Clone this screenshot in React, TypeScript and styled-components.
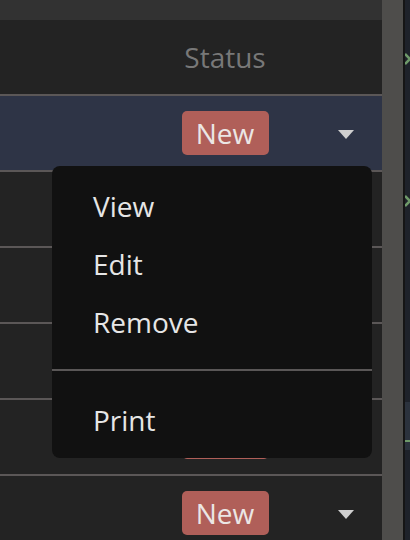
import React from "react";
import styled, { createGlobalStyle } from "styled-components";

const Global = createGlobalStyle`
  html, body { margin: 0; padding: 0; background: #232323; }
  body { font-family: "Open Sans", "Noto Sans", sans-serif; overflow: hidden; }
`;

const Frame = styled.div`
  display: flex;
  width: 410px;
  height: 540px;
  overflow: hidden;
  position: relative;
`;

const Main = styled.div`
  width: 382px;
  display: flex;
  flex-direction: column;
  background: #232323;
`;

const TopBar = styled.div`
  height: 20px;
  flex: none;
  background: #323232;
`;

const Row = styled.div<{ $selected?: boolean; $header?: boolean }>`
  height: 74px;
  flex: none;
  display: grid;
  grid-template-columns: 1fr 90px 72px;
  column-gap: 40px;
  align-items: center;
  justify-items: center;
  background: ${(p) => (p.$selected ? "#2e3446" : "#232323")};
  border-bottom: 2px solid #5b5757;
`;

const HeaderLabel = styled.span`
  grid-column: 2;
  font-size: 28px;
  color: #787878;
  white-space: nowrap;
`;

const Badge = styled.span`
  grid-column: 2;
  width: 87px;
  height: 44px;
  border-radius: 5px;
  background: #b05f59;
  color: #ebe6e5;
  font-size: 28px;
  display: flex;
  align-items: center;
  justify-content: center;
  margin-top: -1px;
`;

const Caret = styled.span`
  grid-column: 3;
  width: 0;
  height: 0;
  border-left: 8.5px solid transparent;
  border-right: 8.5px solid transparent;
  border-top: 9px solid #cfcfcf;
  margin-top: 2px;
`;

const Scrollbar = styled.div`
  width: 21px;
  background: #4e4d4b;
`;

const Divider = styled.div`
  width: 2px;
  background: #151515;
`;

const SidePanel = styled.div`
  flex: 1;
  background: #1e222a;
  display: flex;
  flex-direction: column;
`;

const Mark = styled.svg<{ $top: number }>`
  display: block;
  margin-top: ${(p) => p.$top}px;
`;

const SideBlock = styled.div`
  margin-top: 188px;
  height: 48px;
  background: #2b323d;
  display: flex;
  flex-direction: column;
  justify-content: flex-end;
  padding-bottom: 8px;
  box-sizing: border-box;
`;

const SideLine = styled.div`
  height: 2px;
  background: #6f9a6a;
`;

const Menu = styled.div`
  position: absolute;
  left: 52px;
  top: 166px;
  width: 320px;
  height: 292px;
  box-sizing: border-box;
  padding: 11px 0 9px;
  background: #111111;
  border-radius: 8px;
  display: flex;
  flex-direction: column;
`;

const MenuItem = styled.div`
  height: 58px;
  display: flex;
  align-items: center;
  padding-left: 41px;
  font-size: 28px;
  color: #e6e6e6;
`;

const Separator = styled.div`
  height: 2px;
  margin: 18px 0 20px;
  background: #5a5757;
`;

const rows = [true, false, false, false, false, false];

export default function App() {
  return (
    <>
      <Global />
      <Frame>
        <Main>
          <TopBar />
          <Row $header>
            <HeaderLabel>Status</HeaderLabel>
          </Row>
          {rows.map((sel, i) => (
            <Row key={i} $selected={sel}>
              <Badge>New</Badge>
              <Caret />
            </Row>
          ))}
        </Main>
        <Scrollbar />
        <Divider />
        <SidePanel>
          <Mark $top={52} width="5" height="20" viewBox="0 0 5 20">
            <path d="M0 2 L5 7 L0 12" stroke="#6f9a6a" strokeWidth="2.5" fill="none" />
          </Mark>
          <Mark $top={122} width="5" height="20" viewBox="0 0 5 20">
            <path d="M0 2 L5 7 L0 12" stroke="#6f9a6a" strokeWidth="2.5" fill="none" />
          </Mark>
          <SideBlock>
            <SideLine />
          </SideBlock>
        </SidePanel>
        <Menu>
          <MenuItem>View</MenuItem>
          <MenuItem>Edit</MenuItem>
          <MenuItem>Remove</MenuItem>
          <Separator />
          <MenuItem>Print</MenuItem>
        </Menu>
      </Frame>
    </>
  );
}
